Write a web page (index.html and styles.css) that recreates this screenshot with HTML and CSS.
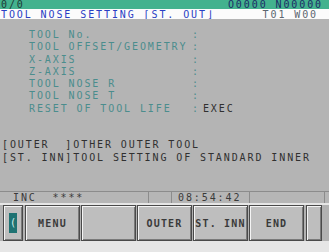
FILE: index.html
```
<!DOCTYPE html>
<html lang="en">
<head>
    <meta charset="UTF-8">
    <title>Tool Nose Setting</title>
    <link rel="stylesheet" href="styles.css">
</head>
<body>
    <div class="screen">
        <div class="topbar">
            <span>0/0</span>
            <span class="prog">O0000 N00000</span>
        </div>
        <div class="title">
            <span class="name">TOOL NOSE SETTING ⌈ST. OUT⌋</span>
            <span class="tool">T01 W00</span>
        </div>
        <div class="main">
            <div class="row"><span class="label">TOOL No.</span><span class="colon">:</span></div>
            <div class="row"><span class="label">TOOL OFFSET/GEOMETRY</span><span class="colon">:</span></div>
            <div class="row"><span class="label">X-AXIS</span><span class="colon">:</span></div>
            <div class="row"><span class="label">Z-AXIS</span><span class="colon">:</span></div>
            <div class="row"><span class="label">TOOL NOSE R</span><span class="colon">:</span></div>
            <div class="row"><span class="label">TOOL NOSE T</span><span class="colon">:</span></div>
            <div class="row"><span class="label">RESET OF TOOL LIFE</span><span class="colon">:</span><span class="value">EXEC</span></div>
            <div class="help">
                <div class="line">[OUTER  ]OTHER OUTER TOOL</div>
                <div class="line">[ST. INN]TOOL SETTING OF STANDARD INNER</div>
            </div>
        </div>
        <div class="status">
            <span class="seg mode">INC  ****</span>
            <span class="seg gap"></span>
            <span class="seg clock">08:54:42</span>
            <span class="seg rest"></span>
        </div>
        <div class="softkeys">
            <div class="key small"><span class="arrow">(</span></div>
            <div class="key">MENU</div>
            <div class="key"></div>
            <div class="key">OUTER</div>
            <div class="key">ST. INN</div>
            <div class="key">END</div>
            <div class="key small right"></div>
        </div>
    </div>
</body>
</html>
```
FILE: styles.css
```
body {
    margin: 0;
    background: #e6e6e6;
    font-family: "DejaVu Sans Mono", monospace;
    font-size: 10px;
    letter-spacing: 1.9px;
}
.screen {
    width: 329px;
    height: 252px;
    background: #e6e6e6;
}
.topbar {
    height: 9px;
    line-height: 9px;
    background: #43b28e;
    color: #1d3a35;
    display: flex;
    justify-content: space-between;
    padding: 0 6px 0 1px;
}
.topbar .prog {
    color: #1c2b66;
}
.title {
    height: 10px;
    line-height: 12px;
    background: #fbfbfb;
    display: flex;
    justify-content: space-between;
    padding: 0 11px 0 1px;
    overflow: hidden;
}
.title .name {
    color: #2a3ec4;
}
.title .tool {
    color: #5c6670;
}
.main {
    height: 162px;
    background: #b4b4b4;
    padding: 10px 0 0 2px;
    line-height: 12.25px;
}
.row {
    display: flex;
    padding-left: 27px;
    color: #4b8d8d;
}
.label {
    width: 163px;
}
.value {
    color: #303030;
    margin-left: 3px;
}
.help {
    margin-top: 24.5px;
    color: #303030;
}
.help .line {
    white-space: pre;
}
.status {
    height: 11px;
    line-height: 12px;
    background: #b6b6b6;
    border-top: 1px solid #8c8c8c;
    display: flex;
    color: #3a3a3a;
    margin-bottom: 2px;
}
.seg {
    border-right: 1px solid #8c8c8c;
    white-space: pre;
}
.mode {
    width: 135px;
    padding-left: 13px;
}
.gap {
    width: 22px;
}
.clock {
    width: 71px;
    padding-left: 6px;
}
.rest {
    width: 74px;
}
.softkeys {
    height: 36px;
    background: #b2b2b2;
    display: flex;
    gap: 1px;
    padding-left: 3px;
}
.key {
    width: 55px;
    box-sizing: border-box;
    background: #bebebe;
    border: 1px solid #4a4a4a;
    box-shadow: inset 1px 1px 0 #f4f4f4, inset -1px -1px 0 #7a7a7a;
    color: #3a3a3a;
    font-weight: bold;
    letter-spacing: 1.2px;
    display: flex;
    align-items: center;
    justify-content: center;
}
.small {
    width: 20px;
    margin-right: 1px;
}
.small.right {
    width: 16px;
    margin-left: 1px;
}
.arrow {
    width: 8px;
    height: 20px;
    background: #1e7272;
    color: #d8f0ee;
    line-height: 20px;
    text-align: center;
    letter-spacing: 0;
    font-weight: normal;
}
```
